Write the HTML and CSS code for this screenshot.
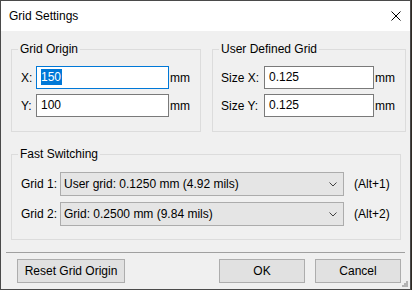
FILE: index.html
```html
<!DOCTYPE html>
<html lang="en">

<head>
    <meta charset="UTF-8">
    <title>Grid Settings</title>
    <link rel="stylesheet" href="styles.css">
</head>

<body>
    <div class="dialog">
        <div class="titlebar">
            <span class="title">Grid Settings</span>
            <svg class="close" width="10" height="10" viewBox="0 0 10 10">
                <path d="M0.5 0.5 L9.5 9.5 M9.5 0.5 L0.5 9.5" stroke="#000" stroke-width="1" fill="none" />
            </svg>
        </div>

        <div class="content">
            <div class="top-row">
                <fieldset class="group origin">
                    <legend>Grid Origin</legend>
                    <div class="row">
                        <label class="lbl">X:</label>
                        <div class="textbox focused"><span class="sel">150</span></div>
                        <span class="unit">mm</span>
                    </div>
                    <div class="row">
                        <label class="lbl">Y:</label>
                        <div class="textbox">100</div>
                        <span class="unit">mm</span>
                    </div>
                </fieldset>

                <fieldset class="group user-grid">
                    <legend>User Defined Grid</legend>
                    <div class="row">
                        <label class="lbl">Size X:</label>
                        <div class="textbox">0.125</div>
                        <span class="unit">mm</span>
                    </div>
                    <div class="row">
                        <label class="lbl">Size Y:</label>
                        <div class="textbox">0.125</div>
                        <span class="unit">mm</span>
                    </div>
                </fieldset>
            </div>

            <fieldset class="group fast">
                <legend>Fast Switching</legend>
                <div class="row">
                    <label class="lbl">Grid 1:</label>
                    <div class="combo">
                        <span>User grid: 0.1250 mm (4.92 mils)</span>
                        <svg width="8" height="5" viewBox="0 0 8 5">
                            <path d="M0.5 0.5 L4 4 L7.5 0.5" stroke="#404040" stroke-width="1" fill="none" />
                        </svg>
                    </div>
                    <span class="hotkey">(Alt+1)</span>
                </div>
                <div class="row">
                    <label class="lbl">Grid 2:</label>
                    <div class="combo">
                        <span>Grid: 0.2500 mm (9.84 mils)</span>
                        <svg width="8" height="5" viewBox="0 0 8 5">
                            <path d="M0.5 0.5 L4 4 L7.5 0.5" stroke="#404040" stroke-width="1" fill="none" />
                        </svg>
                    </div>
                    <span class="hotkey">(Alt+2)</span>
                </div>
            </fieldset>

            <div class="separator"></div>

            <div class="buttons">
                <button class="btn reset">Reset Grid Origin</button>
                <div class="right-buttons">
                    <button class="btn">OK</button>
                    <button class="btn">Cancel</button>
                </div>
            </div>
        </div>

        <!-- resize grip sits over the corner -->
        <svg class="grip" width="6" height="6" viewBox="0 0 6 6">
            <rect x="4" y="0" width="2" height="2" fill="#b4b4b4" />
            <rect x="2" y="2" width="2" height="2" fill="#b4b4b4" />
            <rect x="4" y="2" width="2" height="2" fill="#b4b4b4" />
            <rect x="0" y="4" width="2" height="2" fill="#b4b4b4" />
            <rect x="2" y="4" width="2" height="2" fill="#b4b4b4" />
            <rect x="4" y="4" width="2" height="2" fill="#b4b4b4" />
        </svg>
    </div>
</body>

</html>
```

FILE: styles.css
```css
body {
    margin: 0;
    background-color: #2e2a25;
    font-family: "Liberation Sans", Arial, sans-serif;
    font-size: 12px;
    color: #000;
}

.dialog {
    position: relative;
    width: 411px;
    height: 290px;
    box-sizing: border-box;
    border: 1px solid #4a4a4a;
    background-color: #f0f0f0;
    display: flex;
    flex-direction: column;
}

.titlebar {
    height: 30px;
    background-color: #fff;
    display: flex;
    align-items: center;
    justify-content: space-between;
    padding: 0 9px 0 8px;
}

.title {
    font-size: 12px;
    padding-bottom: 1px;
}

.close {
    display: block;
}

.content {
    flex: 1;
    padding: 10px 0 0 10px;
}

.top-row {
    display: flex;
    gap: 11px;
}

.group {
    margin: 0;
    min-inline-size: 0;
    box-sizing: border-box;
    border: 1px solid #dcdcdc;
    padding: 8px 0 14px 9px;
}

.group legend {
    margin-left: -3px;
    padding: 0 2px;
    line-height: 17px;
}

.origin {
    width: 190px;
}

.user-grid {
    width: 194px;
    padding-left: 8px;
}

.user-grid legend {
    margin-left: -2px;
}

.fast {
    width: 390px;
    margin-top: 14px;
    padding-top: 9px;
    padding-bottom: 13px;
}

.row {
    display: flex;
    align-items: center;
}

.row + .row {
    margin-top: 5px;
}

.fast .row + .row {
    margin-top: 6px;
}

.origin .lbl {
    width: 15px;
}

.user-grid .lbl {
    width: 43px;
}

.fast .lbl {
    width: 39px;
}

.textbox {
    box-sizing: border-box;
    height: 23px;
    border: 1px solid #7a7a7a;
    background-color: #fff;
    padding: 0 4px;
    line-height: 21px;
}

.origin .textbox {
    width: 133px;
}

.user-grid .textbox {
    width: 110px;
}

.textbox.focused {
    border-color: #0078d7;
}

.sel {
    display: inline-block;
    background-color: #0078d7;
    color: #fff;
    line-height: 16px;
    padding-right: 1px;
}

.unit {
    margin-left: 1px;
}

.combo {
    box-sizing: border-box;
    width: 284px;
    height: 24px;
    border: 1px solid #acacac;
    background-color: #e5e5e5;
    display: flex;
    align-items: center;
    justify-content: space-between;
    padding: 0 6px 0 3px;
}

.combo svg {
    display: block;
}

.hotkey {
    margin-left: 10px;
}

.separator {
    width: 399px;
    height: 1px;
    margin: 12px 0 0 -5px;
    background-color: #a0a0a0;
}

.buttons {
    display: flex;
    justify-content: space-between;
    margin: 6px 9px 0 6px;
}

.right-buttons {
    display: flex;
    gap: 10px;
}

.btn {
    box-sizing: border-box;
    height: 24px;
    width: 86px;
    margin: 0;
    padding: 0;
    border: 1px solid #adadad;
    background-color: #e1e1e1;
    font-family: inherit;
    font-size: 12px;
    color: #000;
}

.btn.reset {
    width: 108px;
}

.grip {
    position: absolute;
    right: 2px;
    bottom: 2px;
}
```
